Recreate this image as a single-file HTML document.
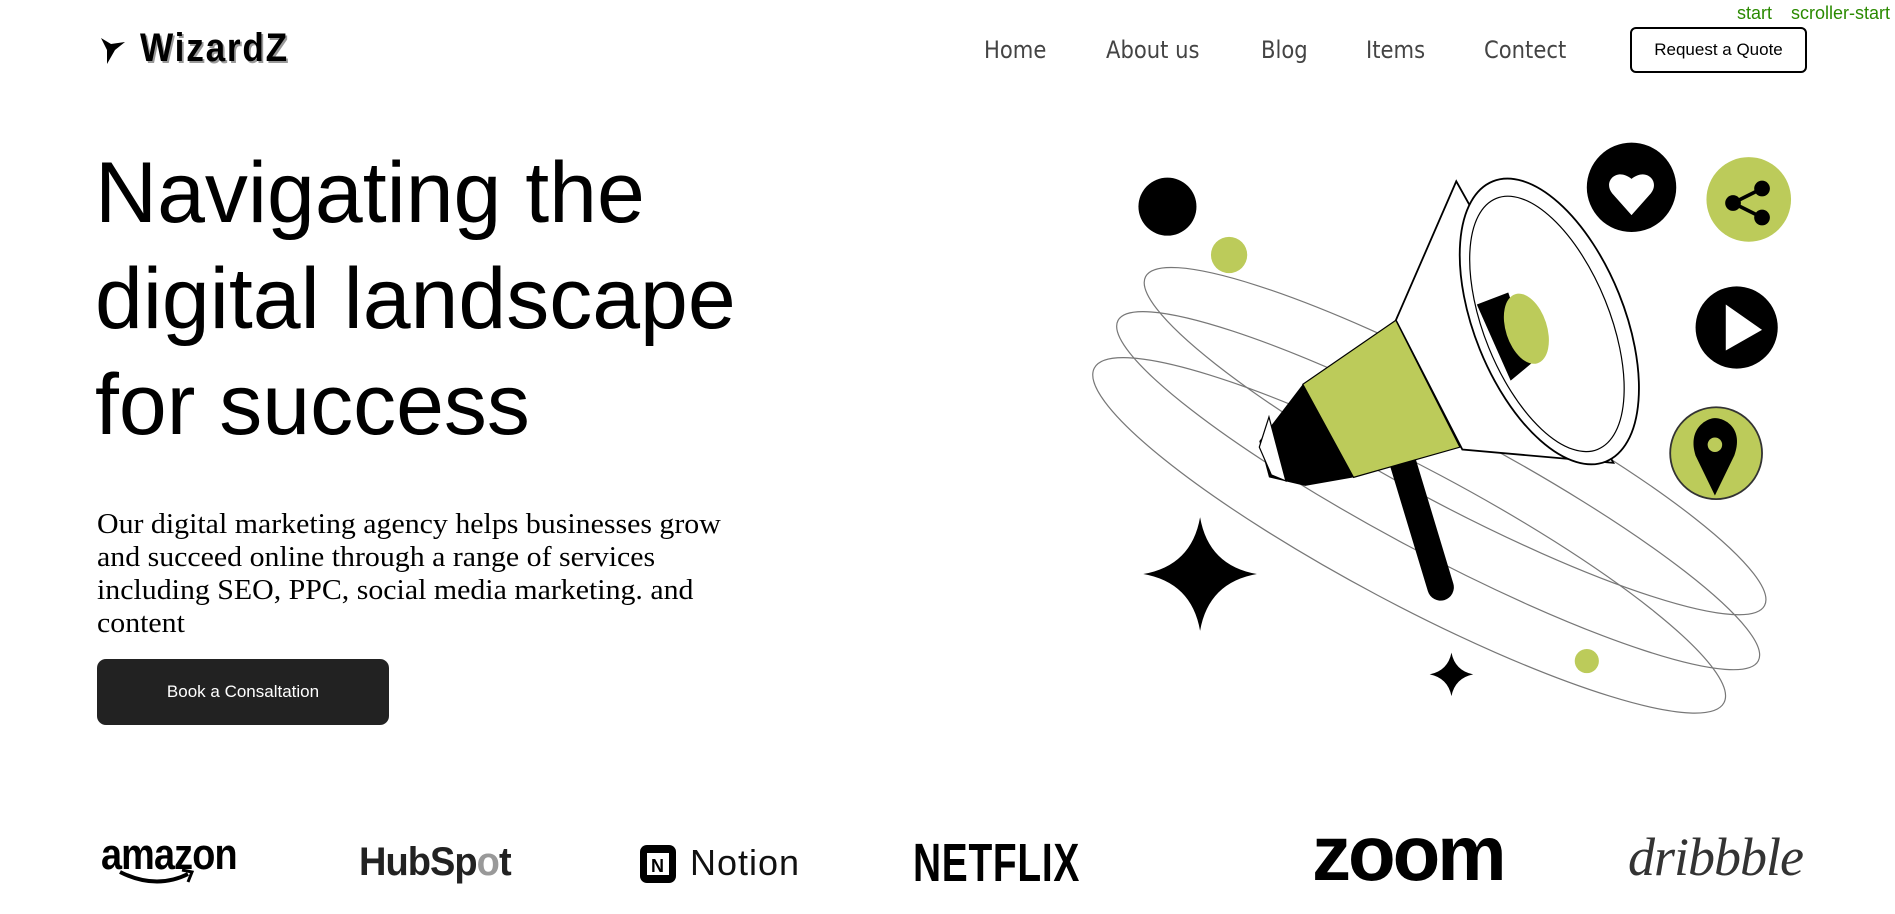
<!DOCTYPE html>
<html><head><meta charset="utf-8"><style>
*{margin:0;padding:0;box-sizing:border-box}
body{width:1895px;height:914px;overflow:hidden;background:#fff;position:relative;font-family:"Liberation Sans",sans-serif}
.a{position:absolute;white-space:nowrap}
.nav{font-size:24px;color:#444;top:36px;font-family:"DejaVu Sans","Liberation Sans",sans-serif;transform:scaleX(.88);transform-origin:left}
h1{position:absolute;left:95px;top:140px;font-weight:400;font-size:86px;line-height:106px;color:#000}
p.d{position:absolute;left:97px;top:508px;font-family:"Liberation Serif",serif;font-size:29px;line-height:33px;color:#000;white-space:nowrap;transform:scaleX(1.03);transform-origin:left}
</style></head><body>
<div class="a" style="left:1737px;top:3px;font-size:18px;color:#2a8a00">start</div>
<div class="a" style="left:1791px;top:3px;font-size:18px;color:#2a8a00">scroller-start</div>

<svg class="a" style="left:97px;top:34px" width="32" height="32" viewBox="0 0 32 32"><path d="M4 4 L14 10 L28 8 L18 16 L10 30 L10 16 Z" fill="#000"/></svg>
<div class="a" style="left:140px;top:26px;font-size:40px;font-weight:900;letter-spacing:2px;color:#000;transform:scaleX(.88);transform-origin:left;text-shadow:2px 2px 0 #999">WizardZ</div>

<div class="a nav" style="left:984px">Home</div>
<div class="a nav" style="left:1106px">About us</div>
<div class="a nav" style="left:1261px">Blog</div>
<div class="a nav" style="left:1366px">Items</div>
<div class="a nav" style="left:1484px">Contect</div>
<div class="a" style="left:1630px;top:27px;width:177px;height:46px;border:2px solid #000;border-radius:6px;font-size:17px;display:flex;align-items:center;justify-content:center">Request a Quote</div>

<h1>Navigating the<br>digital landscape<br>for success</h1>
<p class="d">Our digital marketing agency helps businesses grow<br>and succeed online through a range of services<br>including SEO, PPC, social media marketing. and<br>content</p>
<div class="a" style="left:97px;top:659px;width:292px;height:66px;background:#222;border-radius:9px;color:#fff;font-size:17px;display:flex;align-items:center;justify-content:center">Book a Consaltation</div>

<svg class="a" style="left:0;top:0" width="1895" height="914" viewBox="0 0 1568 756.3">
<g fill="none" stroke="#777" stroke-width="1">
<ellipse cx="1204" cy="365" rx="290" ry="52" transform="rotate(28 1204 365)"/>
<ellipse cx="1190" cy="406" rx="300" ry="52" transform="rotate(28 1190 406)"/>
<ellipse cx="1166" cy="443" rx="295" ry="56" transform="rotate(28 1166 443)"/>
</g>
<circle cx="966" cy="171" r="24" fill="#000"/>
<circle cx="1017" cy="211" r="15" fill="#bccb5a"/>
<circle cx="1313" cy="547" r="10" fill="#bccb5a"/>
<circle cx="1350" cy="155" r="37" fill="#000"/>
<path d="M1350 178 L1334 160 C1326 150 1338 138 1350 148 C1362 138 1374 150 1366 160 Z" fill="#fff"/>
<circle cx="1447" cy="165" r="35" fill="#bccb5a"/>
<g fill="#000" stroke="#000" stroke-width="3"><circle cx="1434" cy="168" r="5"/><circle cx="1458" cy="156" r="5"/><circle cx="1458" cy="180" r="5"/><path d="M1434 168 L1458 156 M1434 168 L1458 180"/></g>
<circle cx="1437" cy="271" r="34" fill="#000"/>
<path d="M1428 252 L1458 273 L1428 290 Z" fill="#fff"/>
<circle cx="1420" cy="375" r="38" fill="#bccb5a" stroke="#333" stroke-width="1.5"/>
<path d="M1419 410 L1403 377 C1396 355 1412 346 1419 346 C1428 346 1443 355 1435 377 Z" fill="#000"/>
<circle cx="1419" cy="368" r="6" fill="#bccb5a"/>
<path d="M993 428 Q1000 468 1040 475 Q1000 482 993 522 Q986 482 946 475 Q986 468 993 428 Z" fill="#000"/>
<path d="M1201 540 Q1204 555 1219 558 Q1204 561 1201 576 Q1198 561 1183 558 Q1198 555 1201 540 Z" fill="#000"/>
<line x1="1160" y1="380" x2="1192" y2="486" stroke="#000" stroke-width="22" stroke-linecap="round"/>
<path d="M1205 150 L1155 265 L1210 372 L1335 383 Z" fill="#fff" stroke="#000" stroke-width="1.5"/>
<ellipse cx="1282" cy="266" rx="62" ry="125" transform="rotate(-22 1282 266)" fill="#fff" stroke="#000" stroke-width="1.5"/>
<ellipse cx="1280" cy="268" rx="52" ry="112" transform="rotate(-22 1280 268)" fill="none" stroke="#000" stroke-width="1"/>
<path d="M1222 252 L1248 242 L1268 300 L1250 315 Z" fill="#000"/>
<ellipse cx="1263" cy="272" rx="17" ry="30" transform="rotate(-18 1263 272)" fill="#bccb5a"/>
<path d="M1155 265 L1078 318 L1120 395 L1208 370 Z" fill="#bccb5a" stroke="#000" stroke-width="1"/>
<path d="M1078 318 L1042 365 L1050 395 L1080 402 L1120 395 Z" fill="#000"/>
<path d="M1050 345 L1042 370 L1052 393 L1064 398 Z" fill="#fff" stroke="#000" stroke-width="1"/>
</svg>

<div class="a" style="left:101px;top:830px;font-size:44px;font-weight:700;letter-spacing:-1px;transform:scaleX(.86);transform-origin:left">amazon</div>
<svg class="a" style="left:118px;top:868px" width="80" height="20"><path d="M2 4 Q38 22 70 6" stroke="#000" stroke-width="4" fill="none"/><path d="M64 2 L74 4 L70 14" stroke="#000" stroke-width="3" fill="none"/></svg>
<div class="a" style="left:359px;top:840px;font-size:40px;font-weight:700;color:#222;letter-spacing:-1px;transform:scaleX(.95);transform-origin:left">HubSp<span style="color:#999">o</span>t</div>
<svg class="a" style="left:637px;top:842px" width="44" height="44"><rect x="3" y="3" width="36" height="38" rx="7" fill="#000"/><rect x="10" y="11" width="22" height="22" fill="#fff"/><text x="14" y="30" font-size="18" font-weight="700" font-family="Liberation Sans">N</text></svg>
<div class="a" style="left:690px;top:842px;font-size:36px;color:#111;letter-spacing:1px">Notion</div>
<div class="a" style="left:913px;top:832px;font-size:54px;font-weight:700;transform:scaleX(.72);transform-origin:left;letter-spacing:1px">NETFLIX</div>
<div class="a" style="left:1312px;top:808px;font-size:78px;font-weight:700;letter-spacing:-3px">zoom</div>
<div class="a" style="left:1628px;top:826px;font-size:54px;font-style:italic;font-family:'Liberation Serif',serif;color:#333;letter-spacing:-1px">dribbble</div>
</body></html>
